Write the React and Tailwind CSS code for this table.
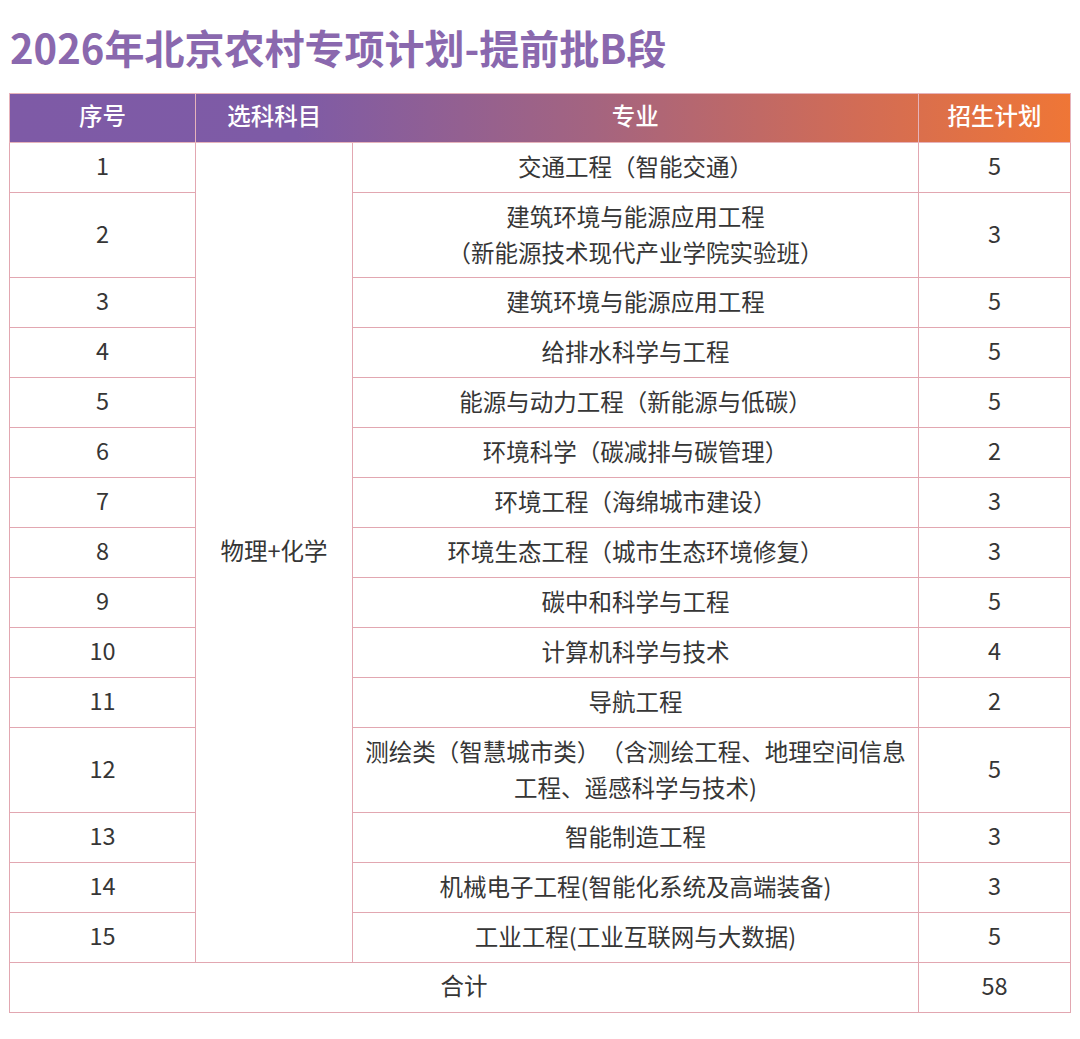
import React from "react";

const rows = [
  ["1", ["交通工程（智能交通）"], "5"],
  ["2", ["建筑环境与能源应用工程", "（新能源技术现代产业学院实验班）"], "3"],
  ["3", ["建筑环境与能源应用工程"], "5"],
  ["4", ["给排水科学与工程"], "5"],
  ["5", ["能源与动力工程（新能源与低碳）"], "5"],
  ["6", ["环境科学（碳减排与碳管理）"], "2"],
  ["7", ["环境工程（海绵城市建设）"], "3"],
  ["8", ["环境生态工程（城市生态环境修复）"], "3"],
  ["9", ["碳中和科学与工程"], "5"],
  ["10", ["计算机科学与技术"], "4"],
  ["11", ["导航工程"], "2"],
  ["12", ["测绘类（智慧城市类）（含测绘工程、地理空间信息", "工程、遥感科学与技术)"], "5"],
  ["13", ["智能制造工程"], "3"],
  ["14", ["机械电子工程(智能化系统及高端装备)"], "3"],
  ["15", ["工业工程(工业互联网与大数据)"], "5"],
];

const font = { fontFamily: '"Noto Sans CJK SC", "Noto Sans", sans-serif' };

export default function App() {
  return (
    <div className="w-[1080px] h-[1039px] bg-white [text-spacing-trim:space-all]" style={font}>
      <div className="pt-[22px] pl-[10px] h-[93px]">
        <h1 className="text-[40px] leading-[50px] font-bold text-[#8a68ae]">
          2026年北京农村专项计划-提前批B段
        </h1>
      </div>
      <div className="pl-[9px]">
        <table className="border-collapse table-fixed w-[1061px] text-[#363636] text-[23.5px]">
          <colgroup>
            <col className="w-[186px]" />
            <col className="w-[157px]" />
            <col className="w-[566px]" />
            <col className="w-[152px]" />
          </colgroup>
          <thead>
            <tr className="h-[49px] text-white bg-[linear-gradient(to_right,#7e5aa6_0%,#7e5ba6_27%,#a46480_55%,#d26c55_80%,#ef7636_100%)]">
              <th className="font-medium border border-[#e6b3bb] text-center pb-[4px]">序号</th>
              <th className="font-medium border-y border-[#e6b3bb] text-center pb-[4px]">选科科目</th>
              <th className="font-medium border-y border-[#e6b3bb] text-center pb-[4px]">专业</th>
              <th className="font-medium border border-[#e6b3bb] text-center pb-[4px]">招生计划</th>
            </tr>
          </thead>
          <tbody>
            {rows.map((r, i) => (
              <tr key={r[0]} className={r[1].length > 1 ? "h-[85px]" : "h-[50px]"}>
                <td className="border border-[#e2a7b1] text-center p-0 pb-[3px]">{r[0]}</td>
                {i === 0 && (
                  <td rowSpan={15} className="border border-[#e2a7b1] text-center p-0 pb-[3px]">
                    物理+化学
                  </td>
                )}
                <td className="border border-[#e2a7b1] text-center p-0 pb-[3px] leading-[36px] whitespace-nowrap">
                  {r[1].map((t) => (
                    <div key={t}>{t}</div>
                  ))}
                </td>
                <td className="border border-[#e2a7b1] text-center p-0 pb-[3px]">{r[2]}</td>
              </tr>
            ))}
            <tr className="h-[50px]">
              <td colSpan={3} className="border border-[#e2a7b1] text-center p-0 pb-[3px]">合计</td>
              <td className="border border-[#e2a7b1] text-center p-0 pb-[3px]">58</td>
            </tr>
          </tbody>
        </table>
      </div>
    </div>
  );
}
